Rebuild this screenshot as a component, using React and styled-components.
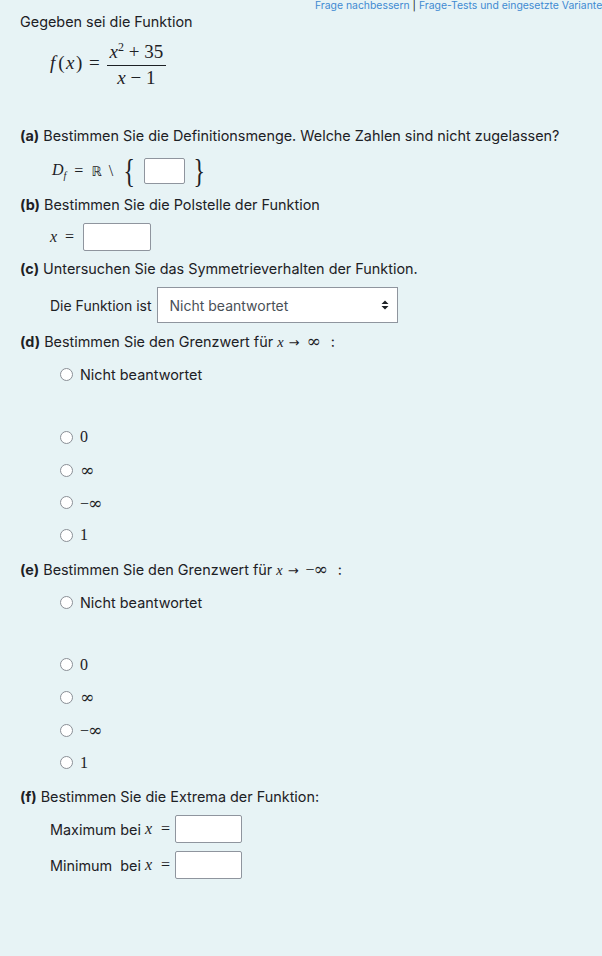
import React from 'react';
import styled, { createGlobalStyle } from 'styled-components';

const GlobalStyle = createGlobalStyle`
  html, body {
    margin: 0;
    padding: 0;
    background: #e7f3f5;
    overflow: hidden;
  }
  body {
    font-family: Inter, "Noto Sans", sans-serif;
    color: #1d2125;
  }
`;

const Page = styled.div`
  min-height: 956px;
  background: #e7f3f5;
  padding: 0 0 40px 20px;
  box-sizing: border-box;
`;

const LinkBar = styled.div`
  padding: 0 0 0 295px;
  font-size: 10.4px;
  line-height: 12px;
  white-space: nowrap;
  color: #3f8ad2;

  span {
    color: #1d2125;
  }
`;

const Intro = styled.p`
  margin: 0;
  font-size: 14.4px;
  line-height: 20px;
`;

const Formula = styled.div`
  display: flex;
  align-items: center;
  margin: 3px 0 0 30px;
  font-family: "Liberation Serif", "DejaVu Serif", serif;
  font-size: 19px;
`;

const Var = styled.i`
  font-family: "Liberation Serif", serif;
  font-style: italic;
  margin-right: ${({ $kern }) => $kern || 0}px;
`;

const Paren = styled.span`
  letter-spacing: 1.5px;
`;

const Rel = styled.span`
  margin: 0 ${({ $space }) => $space || 5}px;
`;

const Fraction = styled.span`
  display: inline-flex;
  flex-direction: column;
  align-items: center;
  margin-left: 2px;

  & > span {
    padding: 0 3px;
    line-height: 24px;
  }
  & > span:first-child {
    border-bottom: 1px solid #1d2125;
    padding-bottom: 1px;
  }
`;

const Part = styled.div`
  margin-top: ${({ $top }) => $top}px;
`;

const PartTitle = styled.div`
  font-size: 14.4px;
  line-height: 20px;

  b {
    font-weight: 700;
  }
`;

const MathRow = styled.div`
  display: flex;
  align-items: center;
  margin: ${({ $top }) => $top || 8}px 0 0 ${({ $left }) => $left}px;
  font-family: "Liberation Serif", serif;
  font-size: 16px;
`;

const Reals = styled.span`
  font-family: "DejaVu Sans", serif;
  font-size: 13px;
`;

const Brace = styled.span`
  display: inline-block;
  margin: 0 ${({ $m }) => $m || 0}px;
  font-family: "Liberation Serif", serif;
  font-size: 34px;
  line-height: 30px;
  transform: scaleX(0.7);
`;

const Box = styled.span`
  display: inline-block;
  width: ${({ $w }) => $w}px;
  height: ${({ $h }) => $h || 27}px;
  margin: 0 ${({ $m }) => $m || 0}px;
  box-sizing: border-box;
  background: #fff;
  border: 1px solid #8f959e;
  border-radius: 2px;
`;

const SelectRow = styled.div`
  display: flex;
  align-items: center;
  gap: 5px;
  margin: 8px 0 0 30px;
  font-size: 14px;
`;

const Select = styled.div`
  display: flex;
  align-items: center;
  justify-content: space-between;
  width: 241px;
  height: 36px;
  box-sizing: border-box;
  padding: 0 8px 0 12px;
  background: #fff;
  border: 1px solid #8f959e;
  color: #495057;
  font-size: 14px;
`;

const Choices = styled.div`
  margin: 5px 0 0 40px;
`;

const Choice = styled.div`
  display: flex;
  align-items: center;
  gap: 7px;
  height: 32.7px;
  font-size: ${({ $math }) => ($math ? '16px' : '14.4px')};
  font-family: ${({ $math }) => ($math ? '"Liberation Serif", serif' : 'inherit')};
  margin-bottom: ${({ $gap }) => $gap || 0}px;
`;

const Radio = styled.span`
  width: 13px;
  height: 13px;
  box-sizing: border-box;
  border: 1px solid #8a8f96;
  border-radius: 50%;
  background: #fff;
  flex: none;
`;

const ExtremaRow = styled.div`
  display: flex;
  align-items: center;
  margin: ${({ $top }) => $top}px 0 0 30px;
  font-size: 14.4px;

  i {
    margin-left: 4px;
    font-family: "Liberation Serif", serif;
    font-size: 16px;
  }
`;

const Eq = styled.span`
  margin: 0 5px 0 9px;
  font-family: "Liberation Serif", serif;
  font-size: 16px;
`;

const Arrow = styled.span`
  margin: 0 7px 0 5px;
  font-family: "DejaVu Sans", sans-serif;
  font-size: 13px;
`;

const Inf = styled.span`
  font-family: "DejaVu Serif", serif;
  font-size: 17px;
  margin-right: ${({ $after }) => $after || 0}px;
`;

const Minus = styled.span`
  font-family: "Liberation Serif", serif;
  font-size: 16px;
  margin-right: -1px;
`;

const SortIcon = () => (
  <svg width="8" height="10" viewBox="0 0 8 10">
    <path d="M4 0.5 L7.5 4 H0.5 Z M4 9.5 L7.5 6 H0.5 Z" fill="#1d2125" />
  </svg>
);

const options = [
  { key: 'zero', label: '0' },
  { key: 'inf', label: <Inf>∞</Inf> },
  { key: 'neg', label: <span><Minus>−</Minus><Inf>∞</Inf></span> },
  { key: 'one', label: '1' },
];

const LimitChoices = () => (
  <Choices>
    <Choice $gap={30}><Radio />Nicht beantwortet</Choice>
    {options.map((o) => (
      <Choice key={o.key} $math><Radio />{o.label}</Choice>
    ))}
  </Choices>
);

export default function App() {
  return (
    <Page>
      <GlobalStyle />
      <LinkBar>
        Frage nachbessern <span>|</span> Frage-Tests und eingesetzte Varianten
      </LinkBar>
      <Intro>Gegeben sei die Funktion</Intro>
      <Formula>
        <span><Var $kern={3}>f</Var><Paren>(<Var>x</Var>)</Paren></span>
        <Rel>=</Rel>
        <Fraction>
          <span><Var>x</Var><sup style={{ fontSize: '12px' }}>2</sup> + 35</span>
          <span><Var>x</Var> − 1</span>
        </Fraction>
      </Formula>

      <Part $top={36}>
        <PartTitle><b>(a)</b> Bestimmen Sie die Definitionsmenge. Welche Zahlen sind nicht zugelassen?</PartTitle>
        <MathRow $left={32} $top={10}>
          <Var>D<sub style={{ fontSize: '10px' }}>f</sub></Var>
          <Rel $space={8}>=</Rel>
          <Reals>ℝ</Reals>
          <Rel $space={7}>\</Rel>
          <Brace $m={1}>{'{'}</Brace>
          <Box $w={41} $h={26} $m={6} />
          <Brace>{'}'}</Brace>
        </MathRow>
      </Part>

      <Part $top={9}>
        <PartTitle><b>(b)</b> Bestimmen Sie die Polstelle der Funktion</PartTitle>
        <MathRow $left={30} $top={8}>
          <Var>x</Var>
          <Rel $space={8}>=</Rel>
          <Box $w={68} $h={28} style={{ marginLeft: '1px' }} />
        </MathRow>
      </Part>

      <Part $top={8}>
        <PartTitle><b>(c)</b> Untersuchen Sie das Symmetrieverhalten der Funktion.</PartTitle>
        <SelectRow>
          Die Funktion ist
          <Select>
            Nicht beantwortet
            <SortIcon />
          </Select>
        </SelectRow>
      </Part>

      <Part $top={8}>
        <PartTitle>
          <b>(d)</b> Bestimmen Sie den Grenzwert für <Var>x</Var><Arrow>→</Arrow><Inf $after={10}>∞</Inf>:
        </PartTitle>
        <LimitChoices />
      </Part>

      <Part $top={7}>
        <PartTitle>
          <b>(e)</b> Bestimmen Sie den Grenzwert für <Var>x</Var><Arrow>→</Arrow><Minus>−</Minus><Inf $after={10}>∞</Inf>:
        </PartTitle>
        <LimitChoices />
      </Part>

      <Part $top={8}>
        <PartTitle><b>(f)</b> Bestimmen Sie die Extrema der Funktion:</PartTitle>
        <ExtremaRow $top={8}>
          Maximum bei <i>x</i><Eq>=</Eq>
          <Box $w={67} $h={28} />
        </ExtremaRow>
        <ExtremaRow $top={8}>
          Minimum&nbsp; bei <i>x</i><Eq>=</Eq>
          <Box $w={67} $h={28} />
        </ExtremaRow>
      </Part>
    </Page>
  );
}
